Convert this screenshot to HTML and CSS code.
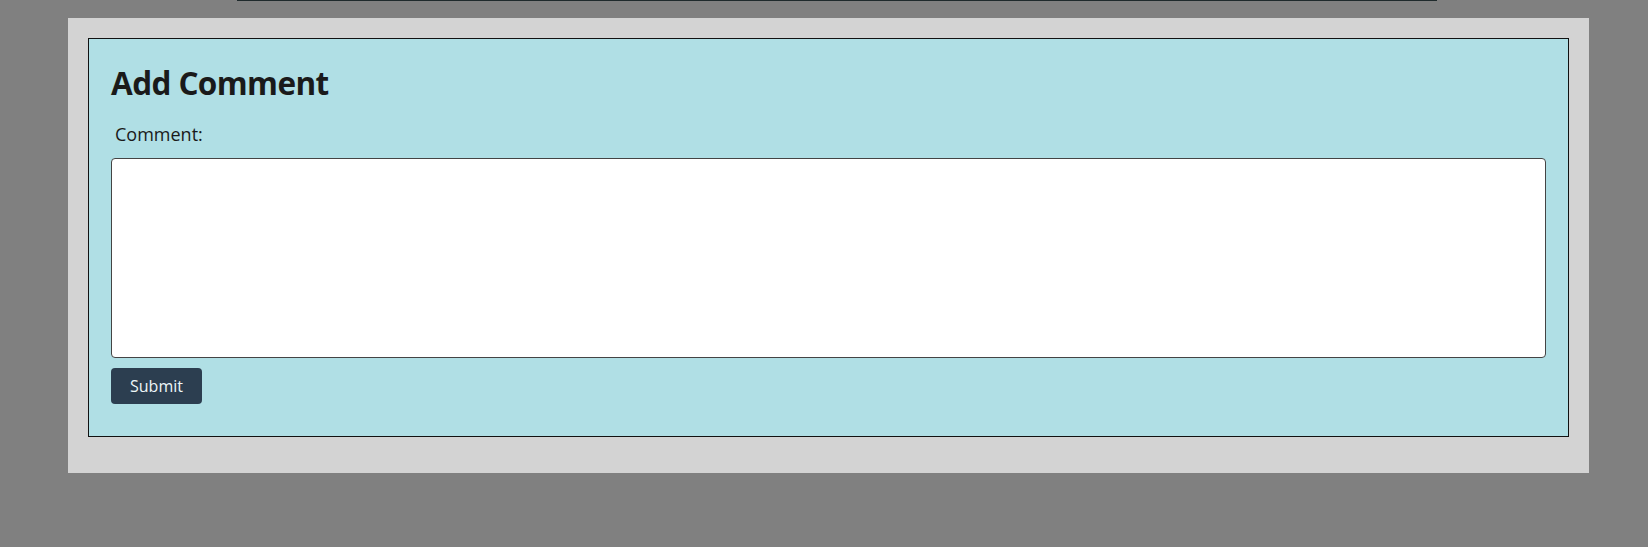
FILE: index.html
```html
<!DOCTYPE html>
<html lang="en">
<head>
<meta charset="utf-8">
<title>Add Comment</title>
<link rel="stylesheet" href="styles.css">
</head>
<body>
<div class="top-edge"></div>
<main class="panel">
  <form class="comment-form">
    <h1 class="title">Add Comment</h1>
    <label class="label" for="comment">Comment:</label>
    <textarea class="input" id="comment"></textarea>
    <button class="submit" type="button">Submit</button>
  </form>
</main>
</body>
</html>
```

FILE: styles.css
```css
html, body {
  margin: 0;
  padding: 0;
}
body {
  background: #808080;
  font-family: "Open Sans", "Noto Sans", sans-serif;
  color: #1a1a1a;
  height: 547px;
  overflow: hidden;
}
.top-edge {
  margin-left: 237px;
  width: 1200px;
  height: 0;
  border-bottom: 1px solid #1f2a2c;
}
.panel {
  display: block;
  margin: 17px 0 0 68px;
  width: 1521px;
  box-sizing: border-box;
  background: #d3d3d3;
  padding: 20px;
}
.comment-form {
  display: flex;
  flex-direction: column;
  align-items: flex-start;
  background: #b0dfe5;
  border: 1px solid #111;
  padding: 22px 22px 32px;
  margin: 0 0 16px;
}
.title {
  margin: 0;
  font-size: 31.5px;
  font-weight: 700;
  line-height: 43.6px;
  letter-spacing: -0.6px;
  color: #1a1a1a;
}
.label {
  margin-top: 17px;
  padding-left: 4px;
  font-size: 18px;
  line-height: 24.5px;
  color: #1a1a1a;
}
.input {
  display: block;
  margin-top: 12px;
  width: 100%;
  height: 200px;
  box-sizing: border-box;
  border: 1px solid #444;
  border-radius: 4px;
  background: #fff;
  resize: none;
  font-family: inherit;
}
.submit {
  margin-top: 10px;
  height: 36px;
  padding: 0 19px;
  border: none;
  border-radius: 4px;
  background: #2c3e50;
  color: #eef6f8;
  font-family: "Open Sans", "Noto Sans", sans-serif;
  font-size: 16px;
  line-height: 36px;
}
```
